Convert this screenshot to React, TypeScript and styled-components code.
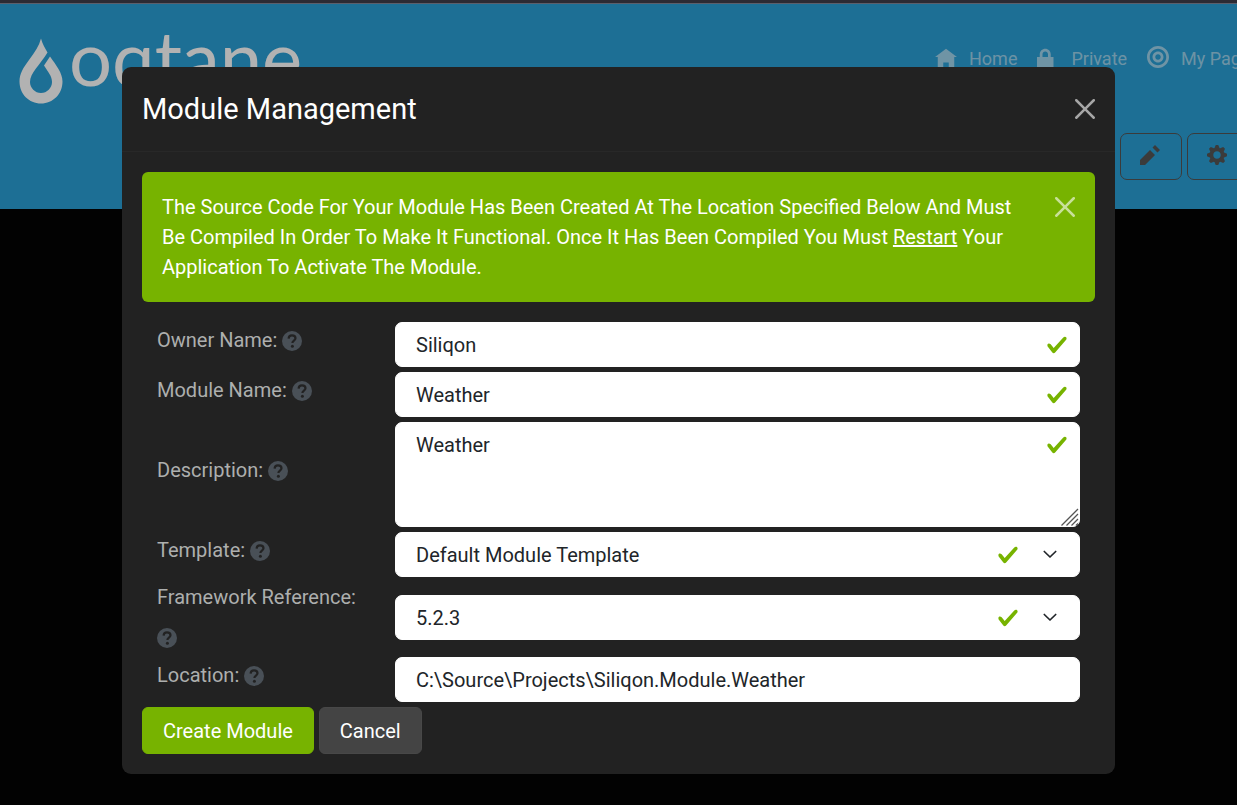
import React from 'react';
import styled, { createGlobalStyle } from 'styled-components';

const GlobalStyle = createGlobalStyle`
  *, *::before, *::after { box-sizing: border-box; }
  body {
    margin: 0;
    background: #000;
    color: #adafae;
    font-family: Roboto, "Liberation Sans", sans-serif;
    font-size: 20px;
    line-height: 30px;
  }
`;

const Page = styled.div`
  min-height: 100vh;
  display: flex;
  flex-direction: column;
  overflow: hidden;
`;

const TopStrip = styled.div`
  height: 4px;
  background: #2c2b34;
  border-bottom: 1px solid #5b5f6c;
`;

const Stage = styled.div`
  position: relative;
  flex: 1;
  background: #040404;
`;

const Banner = styled.header`
  display: grid;
  grid-template-columns: 1fr 302px;
  height: 205px;
  overflow: hidden;
  background: #2a9fd6;
`;

const Brand = styled.a`
  display: flex;
  align-items: flex-start;
  gap: 6px;
  padding: 34px 0 0 19px;
  color: #fff;
  text-decoration: none;
`;

const Wordmark = styled.span`
  font-family: Lato, sans-serif;
  font-size: 76px;
  line-height: 38px;
`;

const BannerSide = styled.div`
  display: flex;
  flex-direction: column;
  gap: 62px;
  padding-top: 42px;
`;

const Nav = styled.nav`
  display: flex;
  gap: 20px;
`;

const NavLink = styled.a`
  display: flex;
  flex: none;
  align-items: flex-start;
  gap: 12px;
  color: rgba(255, 255, 255, 0.55);
  font-size: 18px;
  line-height: 25px;
  text-decoration: none;
  white-space: nowrap;
`;

const Actions = styled.div`
  display: flex;
  align-self: flex-end;
  width: 117px;
  gap: 5px;
`;

const ActionButton = styled.button`
  display: flex;
  flex: none;
  align-items: center;
  justify-content: center;
  width: 62px;
  height: 47px;
  padding: 0 2px 4px 0;
  border: 1px solid #555;
  border-radius: 7px;
  background: transparent;
  color: #555;
`;

const Backdrop = styled.div`
  position: absolute;
  inset: 0;
  display: flex;
  align-items: flex-start;
  justify-content: center;
  padding: 63px 20px 31px;
  background: rgba(0, 0, 0, 0.3);
`;

const Dialog = styled.section`
  width: 100%;
  max-width: 993px;
  border-radius: 9px;
  background: #222;
`;

const DialogHeader = styled.div`
  display: flex;
  align-items: center;
  justify-content: space-between;
  padding: 20px;
  border-bottom: 1px solid #282828;
`;

const Title = styled.h1`
  margin: 0;
  color: #fff;
  font-size: 29px;
  font-weight: 400;
  line-height: 44px;
`;

const CloseButton = styled.button`
  display: flex;
  flex: none;
  padding: 0;
  border: 0;
  background: transparent;
  color: #fff;
  opacity: 0.6;
`;

const DialogBody = styled.div`
  padding: 20px;
`;

const Alert = styled.div`
  display: flex;
  align-items: flex-start;
  justify-content: space-between;
  gap: 20px;
  padding: 20px;
  margin-bottom: 20px;
  border-radius: 6px;
  background: #77b300;
  color: #fff;

  ${CloseButton} { margin-top: 5px; }
`;

const AlertText = styled.p`
  margin: 0;
  max-width: 860px;

  a { color: #fff; }
`;

const Fields = styled.div`
  display: flex;
  flex-direction: column;
  gap: 5px;
  padding: 0 15px;
  margin-bottom: 5px;
`;

const Row = styled.div`
  display: grid;
  grid-template-columns: 238px 1fr;
  align-items: center;
`;

const LabelCell = styled.div`
  display: flex;
  flex-wrap: wrap;
  align-items: flex-start;
  column-gap: 5px;
  padding-right: 20px;

  label { margin-bottom: 10px; }
`;

const HelpMark = styled.span`
  display: flex;
  align-items: center;
  height: 30px;
  padding-top: 2px;
`;

const Control = styled.div`
  position: relative;
  display: flex;

  input, select, textarea {
    width: 100%;
    height: 45px;
    padding: 7px 20px;
    border: 1px solid #fff;
    border-radius: 7px;
    background: #fff;
    color: #212529;
    font: inherit;
    appearance: none;
  }

  textarea {
    height: 105px;
    resize: none;
  }
`;

const Tick = styled.svg<{ $right: number }>`
  position: absolute;
  top: 12px;
  right: ${(p) => p.$right}px;
  pointer-events: none;
`;

const Chevron = styled.svg`
  position: absolute;
  top: 12px;
  right: 20px;
  pointer-events: none;
`;

const Grip = styled.svg`
  position: absolute;
  right: 1px;
  bottom: 1px;
  pointer-events: none;
`;

const Buttons = styled.div`
  display: flex;
  gap: 5px;
`;

const Button = styled.button<{ $primary?: boolean }>`
  height: 47px;
  padding: 0 20px;
  border: 1px solid ${(p) => (p.$primary ? '#77b300' : '#484848')};
  border-radius: 6px;
  background: ${(p) => (p.$primary ? '#77b300' : '#444')};
  color: #fff;
  font: inherit;
`;

const icons = {
  home: 'M4 1l-4 3h1v4h2v-2h2v2h2v-4.03l1 .03-4-3z',
  lock: 'M3 1c-1.1 0-2 .9-2 2v1h-1v4h6v-4h-1v-1c0-1.1-.9-2-2-2zm0 1c.56 0 1 .44 1 1v1h-2v-1c0-.56.44-1 1-1z',
  target:
    'M4 0c-2.2 0-4 1.8-4 4s1.8 4 4 4 4-1.8 4-4-1.8-4-4-4zm0 1c1.66 0 3 1.34 3 3s-1.34 3-3 3-3-1.34-3-3 1.34-3 3-3zm0 1c-1.1 0-2 .9-2 2s.9 2 2 2 2-.9 2-2-.9-2-2-2zm0 1c.56 0 1 .44 1 1s-.44 1-1 1-1-.44-1-1 .44-1 1-1z',
  pencil: 'M6 0l-1 1 2 2 1-1-2-2zm-2 2l-4 4v2h2l4-4-2-2z',
  cog: 'M3.5 0l-.5 1.19c-.1.03-.19.08-.28.13l-1.19-.5-.72.72.5 1.19c-.05.1-.09.18-.13.28l-1.19.5v1l1.19.5c.04.1.08.18.13.28l-.5 1.19.72.72 1.19-.5c.09.04.18.09.28.13l.5 1.19h1l.5-1.19c.09-.04.19-.08.28-.13l1.19.5.72-.72-.5-1.19c.04-.09.09-.19.13-.28l1.19-.5v-1l-1.19-.5c-.03-.09-.08-.19-.13-.28l.5-1.19-.72-.72-1.19.5c-.09-.04-.19-.09-.28-.13l-.5-1.19h-1zm.5 2.5c.83 0 1.5.67 1.5 1.5s-.67 1.5-1.5 1.5-1.5-.67-1.5-1.5.67-1.5 1.5-1.5z',
};

const Icon = ({ name, size }: { name: keyof typeof icons; size: number }) => (
  <svg width={size} height={size} viewBox="0 0 8 8" fill="currentColor" aria-hidden="true">
    <path d={icons[name]} />
  </svg>
);

const Close = ({ label }: { label: string }) => (
  <CloseButton type="button" aria-label={label}>
    <svg width="20" height="20" viewBox="0 0 16 16" fill="currentColor" aria-hidden="true">
      <path d="M.293.293a1 1 0 0 1 1.414 0L8 6.586 14.293.293a1 1 0 1 1 1.414 1.414L9.414 8l6.293 6.293a1 1 0 0 1-1.414 1.414L8 9.414l-6.293 6.293a1 1 0 0 1-1.414-1.414L6.586 8 .293 1.707a1 1 0 0 1 0-1.414z" />
    </svg>
  </CloseButton>
);

const Valid = ({ right = 12 }: { right?: number }) => (
  <Tick $right={right} width="22" height="22" viewBox="0 0 8 8" fill="#77b300" aria-hidden="true">
    <path d="M2.3 6.73L.6 4.53c-.4-1.04.46-1.4 1.1-.8l1.1 1.4 3.4-3.8c.6-.63 1.6-.27 1.2.7l-4 4.6c-.43.5-.8.4-1.1.1z" />
  </Tick>
);

const Arrow = () => (
  <Chevron width="20" height="20" viewBox="0 0 20 20" fill="none" aria-hidden="true">
    <path d="M4.300 7.500L10 13l5.700-5.500" stroke="#212529" strokeWidth="1.700" strokeLinecap="round" strokeLinejoin="round" />
  </Chevron>
);

interface FieldProps {
  id: string;
  label: string;
  children: React.ReactNode;
}

const Field = ({ id, label, children }: FieldProps) => (
  <Row>
    <LabelCell>
      <label htmlFor={id}>{label}</label>
      <HelpMark>
        <svg width="20" height="20" viewBox="0 0 20 20" fill="none" aria-hidden="true">
          <circle cx="10" cy="10" r="10" fill="#495057" />
          <path d="M6.6 7.6C6.700 5.500 8 4.400 10 4.400s3.500 1.100 3.500 2.900c0 2.200-3.100 2.300-3.100 4.600" stroke="#222" strokeWidth="2.200" />
          <circle cx="10.400" cy="15.200" r="1.500" fill="#222" />
        </svg>
      </HelpMark>
    </LabelCell>
    <Control>{children}</Control>
  </Row>
);

export default function App() {
  return (
    <Page>
      <GlobalStyle />
      <TopStrip />
      <Stage>
        <Banner>
          <Brand href="#">
            <svg width="44" height="67" viewBox="0 0 44 67" fill="currentColor" aria-hidden="true">
              <path d="M22 .5C20 8 16 14 10 22C4 30 .5 36 .5 43.500C.5 56 10 65.500 22 65.500S43.500 56 43.500 43.500C43.500 35 37 27 31 18.500L25 27.500C29 34 33 38 33 44C33 50 28 55 22 55S11 50 11 44C11 35 21 27 28.500 14.500C26 10 23.500 6 22 .5Z" />
            </svg>
            <Wordmark>oqtane</Wordmark>
          </Brand>
          <BannerSide>
            <Nav>
              <NavLink href="#"><Icon name="home" size={22} />Home</NavLink>
              <NavLink href="#"><Icon name="lock" size={22} />Private</NavLink>
              <NavLink href="#"><Icon name="target" size={22} />My Page</NavLink>
            </Nav>
            <Actions>
              <ActionButton type="button" aria-label="Edit"><Icon name="pencil" size={20} /></ActionButton>
              <ActionButton type="button" aria-label="Settings"><Icon name="cog" size={20} /></ActionButton>
            </Actions>
          </BannerSide>
        </Banner>

        <Backdrop>
          <Dialog role="dialog" aria-modal="true" aria-labelledby="dialog-title">
            <DialogHeader>
              <Title id="dialog-title">Module Management</Title>
              <Close label="Close" />
            </DialogHeader>
            <DialogBody>
              <Alert role="alert">
                <AlertText>
                  The Source Code For Your Module Has Been Created At The Location Specified Below And Must Be
                  Compiled In Order To Make It Functional. Once It Has Been Compiled You Must{' '}
                  <a href="#">Restart</a> Your Application To Activate The Module.
                </AlertText>
                <Close label="Dismiss" />
              </Alert>
              <Fields>
                <Field id="owner" label="Owner Name:">
                  <input id="owner" type="text" defaultValue="Siliqon" />
                  <Valid />
                </Field>
                <Field id="module" label="Module Name:">
                  <input id="module" type="text" defaultValue="Weather" />
                  <Valid />
                </Field>
                <Field id="description" label="Description:">
                  <textarea id="description" defaultValue="Weather" />
                  <Valid />
                  <Grip width="18" height="18" viewBox="0 0 18 18" stroke="#555" strokeWidth="1.300" aria-hidden="true">
                    <path d="M.5 17.500L17 1M5.500 17.500L17 6M10.500 17.500L17 11M15 17.500L17 15.500" />
                  </Grip>
                </Field>
                <Field id="template" label="Template:">
                  <select id="template"><option>Default Module Template</option></select>
                  <Valid right={61} />
                  <Arrow />
                </Field>
                <Field id="framework" label="Framework Reference:">
                  <select id="framework"><option>5.2.3</option></select>
                  <Valid right={61} />
                  <Arrow />
                </Field>
                <Field id="location" label="Location:">
                  <input id="location" type="text" readOnly value="C:\Source\Projects\Siliqon.Module.Weather" />
                </Field>
              </Fields>
              <Buttons>
                <Button type="button" $primary>Create Module</Button>
                <Button type="button">Cancel</Button>
              </Buttons>
            </DialogBody>
          </Dialog>
        </Backdrop>
      </Stage>
    </Page>
  );
}
